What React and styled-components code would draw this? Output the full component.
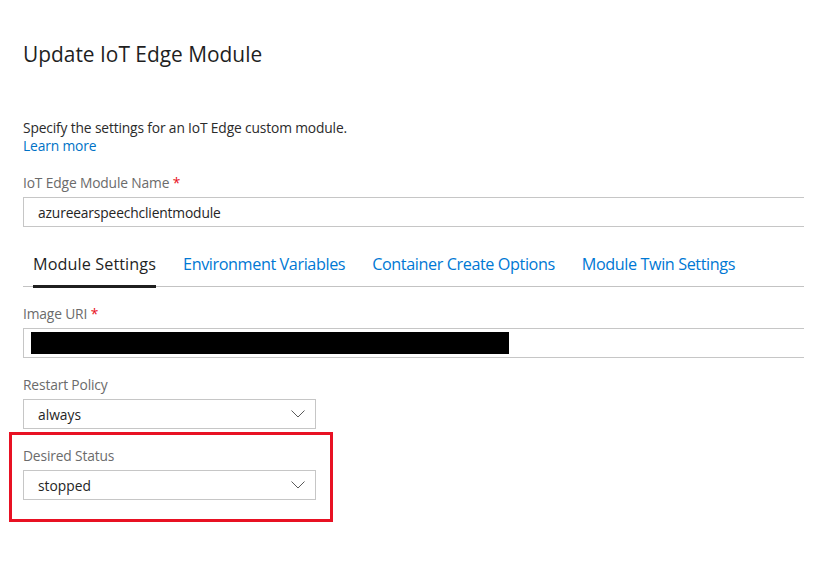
import React from 'react'
import styled, { createGlobalStyle } from 'styled-components';

const GlobalStyle = createGlobalStyle`
  html, body {
    margin: 0;
    padding: 0;
    background: #fff;
    font-family: "Open Sans", "Noto Sans", sans-serif;
    color: #252525;
  }
`;

const Page = styled.div`
  width: 816px;
  height: 573px;
  overflow: hidden;
  padding: 38px 0 0 23px;
  box-sizing: border-box;
`;

const Panel = styled.div`
  width: 781px;
  display: flex;
  flex-direction: column;
`;

const Title = styled.h1`
  margin: 0;
  font-size: 20.9px;
  font-weight: 500;
  line-height: 32px;
  color: #1f1f1f;
`;

const Intro = styled.p`
  margin: 49px 0 0;
  font-size: 13.8px;
  line-height: 18px;
  color: #2b2b2b;
  letter-spacing: -0.15px;
`;

const Link = styled.a`
  display: block;
  color: #0072c6;
  text-decoration: none;
  font-size: 13.8px;
  line-height: 18px;
  letter-spacing: -0.15px;
`;

const Field = styled.div`
  display: flex;
  flex-direction: column;
  gap: 5px;
  margin-top: ${p => p.$top || 0}px;
`;

const Label = styled.label`
  font-size: 13.8px;
  line-height: 18px;
  color: #6b6b6b;
  letter-spacing: -0.15px;

  span {
    color: #e81123;
  }
`;

const TextBox = styled.div`
  width: 100%;
  height: 30px;
  box-sizing: border-box;
  border: 1px solid #c6c6c6;
  border-right: none;
  display: flex;
  align-items: center;
  padding: 0 ${p => (p.$masked ? 7 : 14)}px;
  font-size: 13.8px;
  color: #252525;
  letter-spacing: -0.15px;
`;

const Redacted = styled.div`
  width: 478px;
  height: 22px;
  background: #000;
`;

const Select = styled.div`
  width: 293px;
  height: 30px;
  box-sizing: border-box;
  border: 1px solid #c6c6c6;
  display: flex;
  align-items: center;
  justify-content: space-between;
  padding: 0 9px 0 14px;
  font-size: 13.8px;
  color: #252525;
`;

const Tabs = styled.div`
  display: flex;
  margin-top: 15px;
  border-bottom: 1px solid #c3c3c3;
  height: 44px;
  padding-left: 10px;
  gap: 27px;
`;

const Tab = styled.div`
  font-size: 16.2px;
  letter-spacing: ${p => (p.$active ? '0.1px' : '-0.4px')};
  line-height: 44px;
  color: ${p => (p.$active ? '#1f1f1f' : '#0078d4')};
  border-bottom: 3px solid ${p => (p.$active ? '#1f1f1f' : 'transparent')};
  margin-bottom: -2px;
  white-space: nowrap;
`;

const Highlight = styled.div`
  margin: 3px 0 0 -14px;
  width: 324px;
  height: 90px;
  box-sizing: border-box;
  border: 3px solid #e81123;
  padding: 12px 0 0 11px;
`;

const Chevron = () => (
  <svg width="16" height="10" viewBox="0 0 16 10" fill="none">
    <path d="M1.5 1.5 L8 8 L14.5 1.5" stroke="#5a5a5a" strokeWidth="1" />
  </svg>
);

const tabs = ['Module Settings', 'Environment Variables', 'Container Create Options', 'Module Twin Settings'];

const App = () => {
  return (
    <>
      <GlobalStyle />
      <Page>
        <Panel>
          <Title>Update IoT Edge Module</Title>
          <Intro>Specify the settings for an IoT Edge custom module.</Intro>
          <Link href="#">Learn more</Link>

          <Field $top={19}>
            <Label>IoT Edge Module Name <span>*</span></Label>
            <TextBox>azureearspeechclientmodule</TextBox>
          </Field>

          <Tabs>
            {tabs.map((t, i) => (
              <Tab key={t} $active={i === 0}>{t}</Tab>
            ))}
          </Tabs>

          <Field $top={18}>
            <Label>Image URI <span>*</span></Label>
            <TextBox $masked><Redacted /></TextBox>
          </Field>

          <Field $top={18}>
            <Label>Restart Policy</Label>
            <Select>
              always
              <Chevron />
            </Select>
          </Field>

          <Highlight>
            <Field>
              <Label>Desired Status</Label>
              <Select>
                stopped
                <Chevron />
              </Select>
            </Field>
          </Highlight>
        </Panel>
      </Page>
    </>
  );
};

export default App
